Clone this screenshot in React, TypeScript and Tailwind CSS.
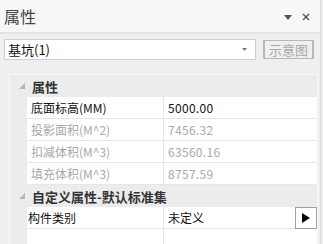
import React from 'react';

const font = { fontFamily: '"Noto Sans CJK SC", "Noto Sans", sans-serif' };

type Row = { label: string; value: string; muted?: boolean };

const rows: Row[] = [
  { label: '底面标高(MM)', value: '5000.00' },
  { label: '投影面积(M^2)', value: '7456.32', muted: true },
  { label: '扣减体积(M^3)', value: '63560.16', muted: true },
  { label: '填充体积(M^3)', value: '8757.59', muted: true },
];

function Category({ title }: { title: string }) {
  return (
    <div className="flex h-[22px] items-center bg-[#ececec]">
      <div className="flex w-[22px] justify-center pl-[2px]">
        <svg width="6" height="6" viewBox="0 0 6 6">
          <path d="M6 0 L6 6 L0 6 Z" fill="#b4b4b4" />
        </svg>
      </div>
      <span className="text-[13px] font-bold leading-none text-[#333]">{title}</span>
    </div>
  );
}

function PropRow({ label, value, muted, last }: Row & { last?: boolean }) {
  const color = muted ? 'text-[#a8a8a8]' : 'text-[#111]';
  return (
    <div className="flex h-[22px]">
      <div className="w-[17px] shrink-0 bg-[#ececec]" />
      <div className={`flex w-[137px] items-center border-b border-r border-[#e6e6e6] bg-white pl-[4px] text-[12px] ${color}`}>
        {label}
      </div>
      <div className={`flex flex-1 items-center border-b border-[#e6e6e6] bg-white pl-[4px] text-[12px] tracking-[0.3px] ${color}`}>
        {value}
        {last && <span />}
      </div>
    </div>
  );
}

export default function App() {
  return (
    <div className="flex h-[244px] w-[323px] overflow-hidden bg-[#efefef]" style={font}>
      <div className="flex w-[320px] flex-col">
        {/* title bar */}
        <div className="flex h-[34px] shrink-0 items-center justify-between border-b-2 border-[#e3e3e3] bg-[#f7f7f7] pl-[4px] pr-[10px]">
          <span className="text-[16px] text-[#444]">属性</span>
          <div className="flex items-center gap-[10px] pt-[2px]">
            <svg width="8" height="5" viewBox="0 0 8 5">
              <path d="M0 0 L8 0 L4 5 Z" fill="#555" />
            </svg>
            <svg width="8" height="8" viewBox="0 0 8 8">
              <path d="M1 1 L7 7 M7 1 L1 7" stroke="#555" strokeWidth="1.4" />
            </svg>
          </div>
        </div>

        {/* selector row */}
        <div className="mt-[5px] flex items-center pl-[4px]">
          <div className="flex h-[21px] w-[252px] items-center justify-between border border-[#d0d0d0] bg-white pl-[3px] pr-[8px]">
            <span className="text-[13px] text-[#111]">基坑(1)</span>
            <svg width="5" height="3" viewBox="0 0 5 3">
              <path d="M0 0 L5 0 L2.5 3 Z" fill="#777" />
            </svg>
          </div>
          <div className="ml-[7px] flex h-[19px] w-[51px] items-center justify-center border-x-2 border-y border-[#b8b8b8] bg-[#efefef] text-[13px] text-[#a8a8a8]">
            示意图
          </div>
        </div>

        {/* property grid */}
        <div className="ml-[9px] mt-[14px] w-[309px] flex-1 border border-b-0 border-[#f8f8f8]">
          <Category title="属性" />
          {rows.map((r) => (
            <PropRow key={r.label} {...r} />
          ))}
          <Category title="自定义属性-默认标准集" />
          <div className="flex h-[22px]">
            <div className="w-[17px] shrink-0 bg-[#ececec]" />
            <div className="flex w-[137px] items-center border-b border-r border-[#e6e6e6] bg-white pl-[1px] text-[12px] text-[#111]">
              构件类别
            </div>
            <div className="flex flex-1 items-center justify-between border-b border-[#e6e6e6] bg-white pl-[4px] text-[12px] text-[#111]">
              未定义
              <div className="flex h-[22px] w-[22px] items-center justify-center border border-[#a0a0a0] bg-white">
                <svg width="8" height="10" viewBox="0 0 8 10">
                  <path d="M0 0 L8 5 L0 10 Z" fill="#000" />
                </svg>
              </div>
            </div>
          </div>
          <div className="flex h-[30px]">
            <div className="w-[17px] shrink-0 bg-[#ececec]" />
            <div className="w-[137px] border-r border-[#e6e6e6] bg-white" />
            <div className="flex-1 bg-white" />
          </div>
        </div>
      </div>
      <div className="w-[3px] border-l border-[#dadada] bg-[#e9e9e9]" />
    </div>
  );
}
